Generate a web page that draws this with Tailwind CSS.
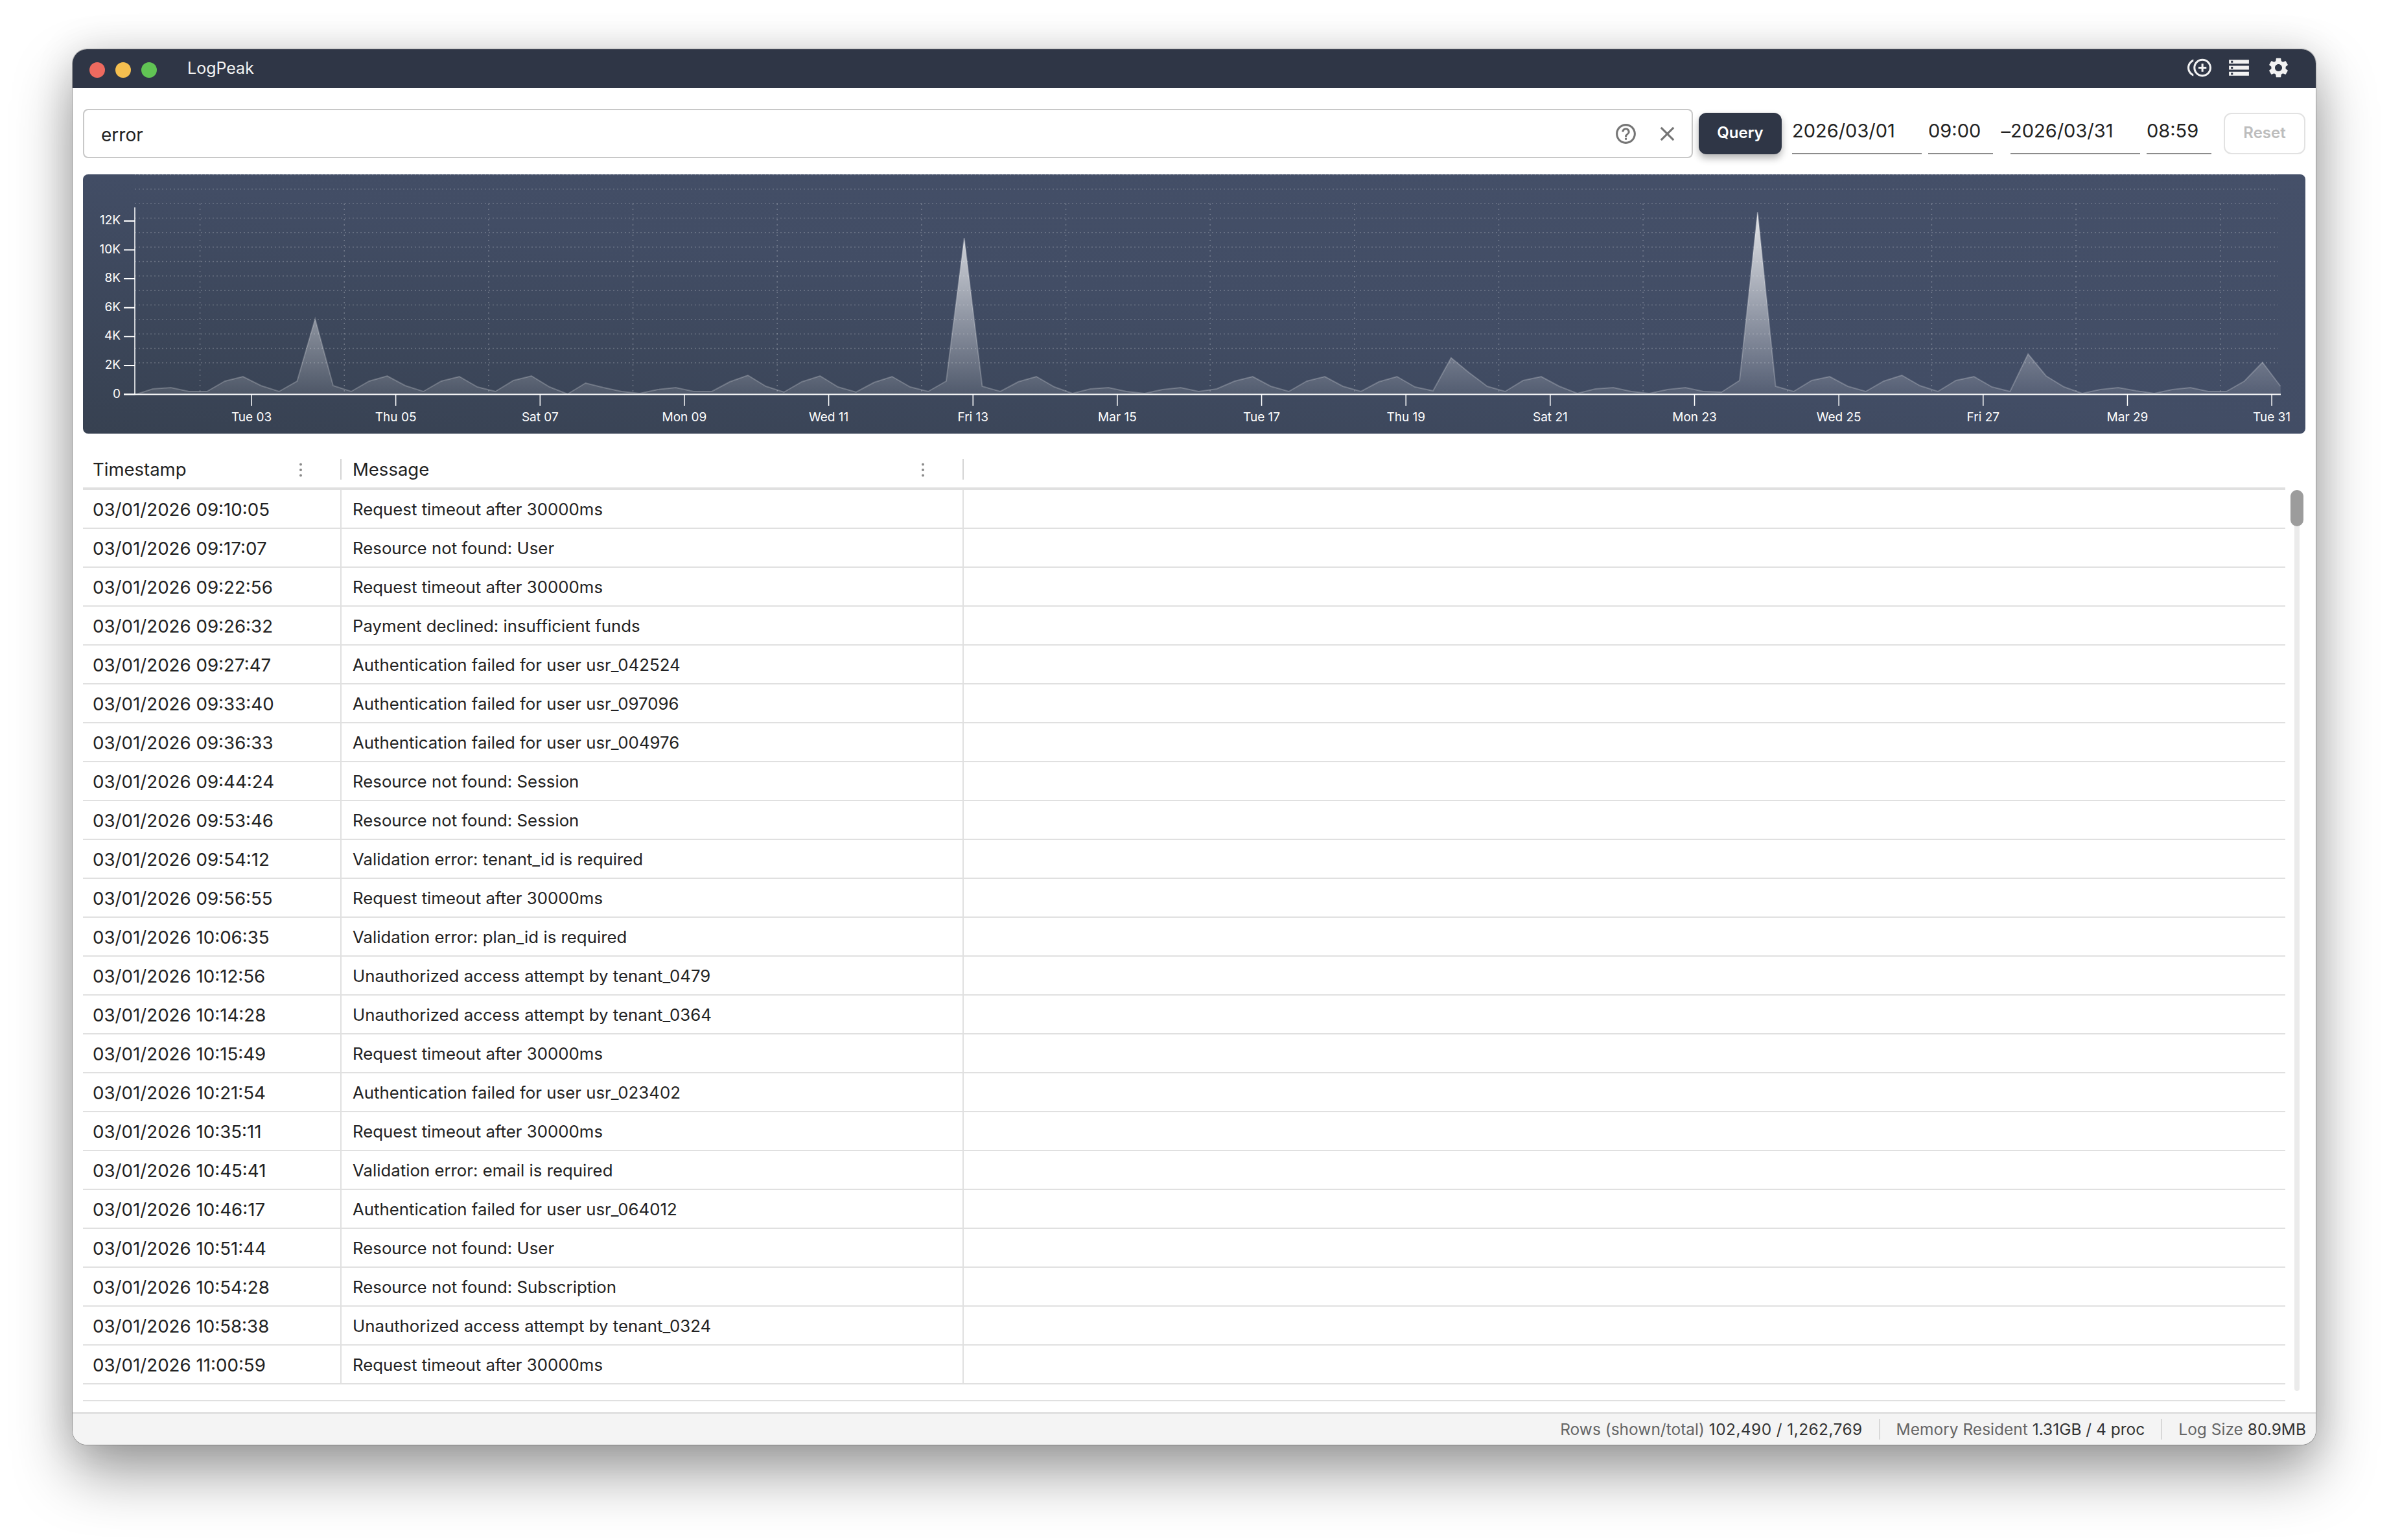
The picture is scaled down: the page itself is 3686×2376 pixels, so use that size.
<!DOCTYPE html>
<html lang="en">
<head>
    <meta charset="UTF-8">
    <script src="https://cdn.jsdelivr.net/npm/@tailwindcss/browser@4"></script>
    <title>LogPeak</title>
</head>
<body class="bg-white pl-[112px] pt-[76px] h-[2376px] w-[3686px] overflow-hidden font-['Inter','Liberation_Sans',sans-serif]">

    <!-- Ventana -->
    <div class="flex flex-col w-[3461px] h-[2153px] bg-white rounded-[22px] overflow-hidden shadow-[0_0_0_1px_rgba(0,0,0,0.25),0_44px_90px_rgba(0,0,0,0.38),0_0_60px_rgba(0,0,0,0.12)]">

        <!-- Barra de título -->
        <div class="flex items-center h-[60px] shrink-0 bg-[#2f3646] pl-[26px] pr-[39px]">
            <span class="w-6 h-6 rounded-full bg-[#ee6a5f] mt-[3px]"></span>
            <span class="w-6 h-6 rounded-full bg-[#f5bf4f] ml-4 mt-[3px]"></span>
            <span class="w-6 h-6 rounded-full bg-[#61c454] ml-4 mt-[3px]"></span>
            <span class="ml-[47px] text-[25px] text-[#f2f2f2] flex-1">LogPeak</span>
            <div class="flex items-center gap-6 pb-[3px] text-[#f2f2f2]">
                <svg class="w-[37px] h-[37px] fill-current" viewBox="0 0 24 24"><path d="M16 8h-2v3h-3v2h3v3h2v-3h3v-2h-3zM2 12c0-2.79 1.64-5.2 4.01-6.32V3.52C2.52 4.76 0 8.09 0 12s2.52 7.24 6.01 8.48v-2.16C3.64 17.2 2 14.79 2 12zm13-9c-4.96 0-9 4.04-9 9s4.04 9 9 9 9-4.04 9-9-4.04-9-9-9zm0 16c-3.86 0-7-3.14-7-7s3.14-7 7-7 7 3.14 7 7-3.14 7-7 7z"/></svg>
                <svg class="w-[37px] h-[37px] fill-current" viewBox="0 0 24 24"><path d="M2 20h20v-4H2v4zm2-3h2v2H4v-2zM2 4v4h20V4H2zm4 3H4V5h2v2zm-4 7h20v-4H2v4zm2-3h2v2H4v-2z"/></svg>
                <svg class="w-[37px] h-[37px] fill-current" viewBox="0 0 24 24"><path d="M19.14 12.94c.04-.3.06-.61.06-.94 0-.32-.02-.64-.07-.94l2.03-1.58c.18-.14.23-.41.12-.61l-1.92-3.32c-.12-.22-.37-.29-.59-.22l-2.39.96c-.5-.38-1.03-.7-1.62-.94l-.36-2.54c-.04-.24-.24-.41-.48-.41h-3.84c-.24 0-.43.17-.47.41l-.36 2.54c-.59.24-1.13.57-1.62.94l-2.39-.96c-.22-.08-.47 0-.59.22L2.74 8.87c-.12.21-.08.47.12.61l2.03 1.58c-.05.3-.09.63-.09.94s.02.64.07.94l-2.03 1.58c-.18.14-.23.41-.12.61l1.92 3.32c.12.22.37.29.59.22l2.39-.96c.5.38 1.03.7 1.62.94l.36 2.54c.05.24.24.41.48.41h3.84c.24 0 .44-.17.47-.41l.36-2.54c.59-.24 1.13-.56 1.62-.94l2.39.96c.22.08.47 0 .59-.22l1.92-3.32c.12-.22.07-.47-.12-.61l-2.01-1.58zM12 15.6c-1.98 0-3.6-1.62-3.6-3.6s1.62-3.6 3.6-3.6 3.6 1.62 3.6 3.6-1.62 3.6-3.6 3.6z"/></svg>
            </div>
        </div>

        <!-- Barra de búsqueda -->
        <div class="flex items-center h-[76px] mt-8 ml-4 mr-4 shrink-0">
            <div class="flex items-center w-[2484px] h-[76px] border-2 border-[#c8c8c8] rounded-[8px] pl-[26px] pr-[19px]">
                <span class="flex-1 text-[28px] text-[#222] pt-[3px]">error</span>
                <svg class="w-[37px] h-[37px] fill-[#757575]" viewBox="0 0 24 24"><path d="M11 18h2v-2h-2v2zm1-16C6.48 2 2 6.48 2 12s4.48 10 10 10 10-4.48 10-10S17.52 2 12 2zm0 18c-4.41 0-8-3.59-8-8s3.59-8 8-8 8 3.59 8 8-3.59 8-8 8zm0-14c-2.21 0-4 1.79-4 4h2c0-1.1.9-2 2-2s2 .9 2 2c0 2-3 1.75-3 5h2c0-2.25 3-2.5 3-5 0-2.21-1.79-4-4-4z"/></svg>
                <svg class="w-[37px] h-[37px] fill-[#757575] ml-[27px]" viewBox="0 0 24 24"><path d="M19 6.41L17.59 5 12 10.59 6.41 5 5 6.41 10.59 12 5 17.59 6.41 19 12 13.41 17.59 19 19 17.59 13.41 12z"/></svg>
            </div>
            <button class="ml-[9px] w-[128px] h-[64px] pb-[3px] bg-[#2f3646] text-white text-[24px] font-semibold rounded-[12px] shadow-[0_6px_12px_rgba(0,0,0,0.3)]">Query</button>
            <div class="ml-4 w-[200px] h-[64px] flex items-center text-[29px] text-[#222] border-b-2 border-[#8c8c8c] pb-[7px]">2026/03/01</div>
            <div class="ml-[10px] w-[100px] h-[64px] flex items-center text-[29px] text-[#222] border-b-2 border-[#8c8c8c] pb-[7px]">09:00</div>
            <span class="w-[27px] text-right text-[29px] text-[#222] h-[64px] flex items-center justify-end pb-[7px]">–</span>
            <div class="w-[200px] h-[64px] flex items-center text-[29px] text-[#222] border-b-2 border-[#8c8c8c] pb-[7px]">2026/03/31</div>
            <div class="ml-[10px] w-[100px] h-[64px] flex items-center text-[29px] text-[#222] border-b-2 border-[#8c8c8c] pb-[7px]">08:59</div>
            <button class="ml-[19px] w-[126px] h-[64px] pb-[3px] border-2 border-[#e2e2e2] text-[#bdbdbd] text-[24px] font-semibold rounded-[12px]">Reset</button>
        </div>

        <!-- Gráfico -->
        <div class="mt-[25px] mx-4 h-[400px] shrink-0 rounded-[8px] overflow-hidden bg-linear-to-bl from-[#455069] via-[#424d65] to-[#374151]">
            <svg id="chart" class="block w-[3429px] h-[400px]" viewBox="128 269 3429 400" xmlns="http://www.w3.org/2000/svg">
                <defs>
                    <linearGradient id="areaFill" gradientUnits="userSpaceOnUse" x1="0" y1="327" x2="0" y2="609">
                        <stop offset="0" stop-color="#fff" stop-opacity="0.85"/>
                        <stop offset="1" stop-color="#fff" stop-opacity="0.1"/>
                    </linearGradient>
                </defs>
            </svg>
        </div>

        <!-- Tabla -->
        <div class="flex flex-col flex-1 min-h-0 ml-4 relative">
            <div class="flex items-center h-[87px] w-[3398px] border-b-4 border-[#e0e0e0] text-[27.5px] text-[#222] pt-[39px] pb-[12px]">
                <div class="flex items-center w-[399px] h-full pl-[15px] pt-[2px] border-r-2 border-[#d4d4d4]">
                    <span class="flex-1">Timestamp</span>
                    <svg class="w-[8px] h-[24px] mr-[57px] fill-[#8a8a8a]" viewBox="0 0 8 24"><circle cx="4" cy="3.5" r="2"/><circle cx="4" cy="12" r="2"/><circle cx="4" cy="20.5" r="2"/></svg>
                </div>
                <div class="flex items-center w-[960px] h-full pl-[17px] pt-[2px] border-r-2 border-[#d4d4d4]">
                    <span class="flex-1">Message</span>
                    <svg class="w-[8px] h-[24px] mr-[57px] fill-[#8a8a8a]" viewBox="0 0 8 24"><circle cx="4" cy="3.5" r="2"/><circle cx="4" cy="12" r="2"/><circle cx="4" cy="20.5" r="2"/></svg>
                </div>
            </div>
            <div id="rows" class="w-[3398px]"></div>
            <div class="h-[26px] w-[3398px] border-b-2 border-[#e0e0e0]"></div>

            <!-- Barra de desplazamiento -->
            <div class="absolute left-[3412px] top-[87px] w-[8px] h-[1390px] rounded-full bg-[#ebebeb]">
                <div class="w-[20px] h-[56px] -ml-[6px] rounded-full bg-[#9c9c9c]"></div>
            </div>
        </div>

        <!-- Barra de estado -->
        <div class="flex items-center justify-end h-[50px] shrink-0 bg-[#f4f4f4] border-t-2 border-[#d8d8d8] pr-[15px] text-[24.5px] text-[#666]">
            <span>Rows (shown/total) <span class="text-[#333] tracking-[0.4px]">102,490 / 1,262,769</span></span>
            <span class="w-[2px] h-[32px] bg-[#d8d8d8] mx-[25px]"></span>
            <span>Memory Resident <span class="text-[#333]">1.31GB / 4 proc</span></span>
            <span class="w-[2px] h-[32px] bg-[#d8d8d8] mx-[25px]"></span>
            <span>Log Size <span class="text-[#333]">80.9MB</span></span>
        </div>
    </div>

    <script>
        // Filas de la tabla
        const filas = [
            ['03/01/2026 09:10:05', 'Request timeout after 30000ms'],
            ['03/01/2026 09:17:07', 'Resource not found: User'],
            ['03/01/2026 09:22:56', 'Request timeout after 30000ms'],
            ['03/01/2026 09:26:32', 'Payment declined: insufficient funds'],
            ['03/01/2026 09:27:47', 'Authentication failed for user usr_042524'],
            ['03/01/2026 09:33:40', 'Authentication failed for user usr_097096'],
            ['03/01/2026 09:36:33', 'Authentication failed for user usr_004976'],
            ['03/01/2026 09:44:24', 'Resource not found: Session'],
            ['03/01/2026 09:53:46', 'Resource not found: Session'],
            ['03/01/2026 09:54:12', 'Validation error: tenant_id is required'],
            ['03/01/2026 09:56:55', 'Request timeout after 30000ms'],
            ['03/01/2026 10:06:35', 'Validation error: plan_id is required'],
            ['03/01/2026 10:12:56', 'Unauthorized access attempt by tenant_0479'],
            ['03/01/2026 10:14:28', 'Unauthorized access attempt by tenant_0364'],
            ['03/01/2026 10:15:49', 'Request timeout after 30000ms'],
            ['03/01/2026 10:21:54', 'Authentication failed for user usr_023402'],
            ['03/01/2026 10:35:11', 'Request timeout after 30000ms'],
            ['03/01/2026 10:45:41', 'Validation error: email is required'],
            ['03/01/2026 10:46:17', 'Authentication failed for user usr_064012'],
            ['03/01/2026 10:51:44', 'Resource not found: User'],
            ['03/01/2026 10:54:28', 'Resource not found: Subscription'],
            ['03/01/2026 10:58:38', 'Unauthorized access attempt by tenant_0324'],
            ['03/01/2026 11:00:59', 'Request timeout after 30000ms'],
        ];
        const contenedor = document.getElementById('rows');
        filas.forEach(([ts, msg]) => {
            const fila = document.createElement('div');
            fila.className = 'flex h-[60px] border-b-2 border-[#e0e0e0] text-[#222]';
            const a = document.createElement('div');
            a.className = 'flex items-center w-[399px] pl-[15px] pt-[3px] border-r-2 border-[#e0e0e0] text-[27.7px]';
            a.textContent = ts;
            const b = document.createElement('div');
            b.className = 'flex items-center w-[960px] pl-[17px] pt-[3px] border-r-2 border-[#e0e0e0] text-[25.8px]';
            b.textContent = msg;
            fila.append(a, b);
            contenedor.appendChild(fila);
        });

        // Gráfico: valores leídos en y de pantalla, un punto cada 6 horas
        const ys = [609,600,598,604,604,588,581,595,604,588,492,595,604,588,580,595,604,588,581,597,604,587,580,597,608,591,598,604,607,601,598,604,604,589,579,596,605,589,580,597,605,590,581,597,604,588,367,
            596,604,589,581,597,607,600,598,604,607,601,598,604,600,588,581,596,604,588,581,596,604,589,581,597,603,552,575,596,604,587,581,596,607,600,598,604,607,601,598,604,605,587,
            327,596,604,587,581,596,604,588,579,595,604,587,581,597,604,546,580,597,607,601,598,603,607,601,598,604,604,588,559,596];
        const svg = document.getElementById('chart');
        const NS = 'http://www.w3.org/2000/svg';
        function el(tag, attrs, text) {
            const n = document.createElementNS(NS, tag);
            Object.entries(attrs).forEach(([k, v]) => n.setAttribute(k, v));
            if (text) n.textContent = text;
            svg.appendChild(n);
        }
        const paso = 27.82, x0 = 208, base = 608;
        for (let i = 0; i < 14; i++) {
            const y = 269.5 + i * 22.33;
            el('line', { x1: x0, x2: 3515, y1: y, y2: y, stroke: '#fff', 'stroke-opacity': 0.22, 'stroke-width': 1.5, 'stroke-dasharray': '2 4' });
        }
        for (let i = 0; i < 15; i++) {
            const x = 308.6 + i * 222.65;
            el('line', { x1: x, x2: x, y1: 314, y2: base, stroke: '#fff', 'stroke-opacity': 0.25, 'stroke-width': 1.5, 'stroke-dasharray': '2 6' });
        }
        const linea = ys.map((y, i) => (x0 + i * paso).toFixed(1) + ',' + y).join(' ');
        el('polygon', { points: x0 + ',' + base + ' ' + linea + ' 3519,' + base, fill: 'url(#areaFill)' });
        el('polyline', { points: linea, fill: 'none', stroke: '#fff', 'stroke-opacity': 0.22, 'stroke-width': 2 });

        // Ejes
        el('line', { x1: x0, x2: x0, y1: 320, y2: base + 1, stroke: '#fff', 'stroke-width': 1.5 });
        el('line', { x1: 191, x2: 3519, y1: base + 0.5, y2: base + 0.5, stroke: '#fff', 'stroke-width': 2 });
        ['0', '2K', '4K', '6K', '8K', '10K', '12K'].forEach((t, i) => {
            const y = 608.5 - i * 44.6;
            el('line', { x1: 191, x2: x0, y1: y, y2: y, stroke: '#fff', 'stroke-width': 2 });
            el('text', { x: 186, y: y + 5, fill: '#fff', 'font-size': 19, 'text-anchor': 'end' }, t);
        });
        ['Tue 03', 'Thu 05', 'Sat 07', 'Mon 09', 'Wed 11', 'Fri 13', 'Mar 15', 'Tue 17', 'Thu 19', 'Sat 21', 'Mon 23', 'Wed 25', 'Fri 27', 'Mar 29', 'Tue 31'].forEach((t, i) => {
            const x = 388 + i * 222.65;
            el('line', { x1: x, x2: x, y1: base, y2: 626, stroke: '#fff', 'stroke-width': 1.5 });
            el('text', { x: x, y: 650, fill: '#fff', 'font-size': 19, 'text-anchor': 'middle' }, t);
        });
    </script>
</body>
</html>
